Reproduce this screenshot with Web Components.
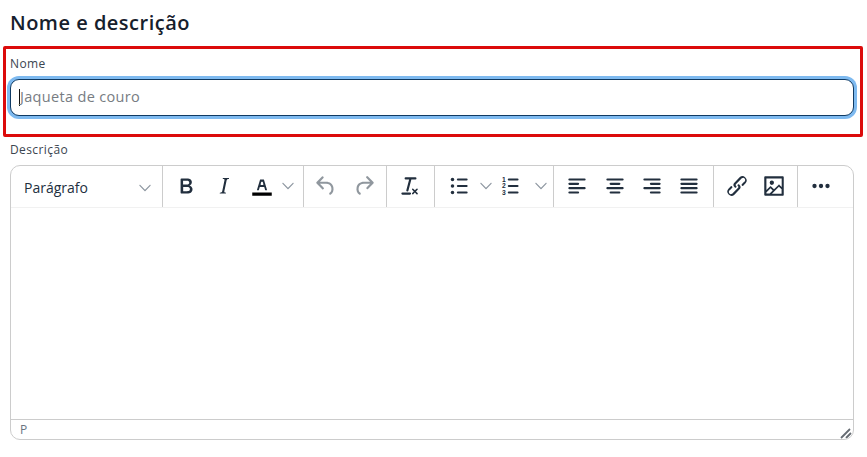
<!DOCTYPE html>
<html lang="pt"><head><meta charset="utf-8"><title>Nome e descrição</title>
<style>html,body{margin:0;padding:0;background:#fff;font-family:"Open Sans","Noto Sans",sans-serif}</style></head>
<body>
<form-section heading="Nome e descrição">
  <highlight-box><text-field label="Nome" placeholder="Jaqueta de couro"></text-field></highlight-box>
  <rich-editor label="Descrição"></rich-editor>
</form-section>
<script>
const I={
bold:'<path d="M7.8 19c-.3 0-.5 0-.6-.2l-.2-.5V5.7c0-.2 0-.4.2-.5l.6-.2h5c1.5 0 2.7.3 3.5 1 .7.6 1.1 1.4 1.1 2.5a3 3 0 0 1-.6 1.9c-.4.6-1 1-1.6 1.2.4.1.9.3 1.3.6s.8.7 1 1.2c.4.4.5 1 .5 1.6 0 1.3-.4 2.3-1.3 3-.8.7-2.1 1-3.8 1H7.8Zm5-8.3c.6 0 1.2-.1 1.6-.5.4-.3.6-.7.6-1.3 0-1.1-.8-1.7-2.3-1.7H9.3v3.5h3.4Zm.5 6c.7 0 1.3-.1 1.7-.4.4-.4.6-.9.6-1.5s-.2-1-.7-1.4c-.4-.3-1-.4-2-.4H9.4v3.8h4Z"/>',
italic:'<path d="M16.7 4.7l-.1.9h-.3c-.6 0-1 0-1.4.3-.3.3-.4.6-.5 1.1l-2.1 9.8v.6c0 .5.4.8 1.4.8h.2l-.2.8H8l.2-.8h.2c1.1 0 1.8-.5 2-1.5l2-9.8.1-.5c0-.6-.4-.8-1.4-.8h-.3l.2-.9h5.8Z"/>',
color:'<path d="M3 18h18v3H3z" fill="#000"/><path d="M8.7 16h-.8a.5.5 0 0 1-.5-.6l2.7-9c.1-.3.3-.4.5-.4h2.8c.2 0 .4.1.5.4l2.7 9a.5.5 0 0 1-.5.6h-.8a.5.5 0 0 1-.4-.4l-.7-2.2c0-.3-.3-.4-.5-.4h-3.4c-.2 0-.4.1-.5.4l-.7 2.2c0 .2-.2.4-.4.4Zm2.6-7.6-.6 2a.5.5 0 0 0 .5.6h1.6a.5.5 0 0 0 .5-.6l-.6-2c0-.3-.3-.4-.5-.4h-.4c-.2 0-.4.1-.5.4Z"/>',
undo:'<path d="M6.4 8H12c3.7 0 6.2 2 6.8 5.1.6 2.7-.4 5.6-2.3 6.8a1 1 0 0 1-1-1.8c1.1-.6 1.8-2.7 1.4-4.6-.5-2.1-2.1-3.5-4.9-3.5H6.4l3.3 3.3a1 1 0 1 1-1.4 1.4l-5-5a1 1 0 0 1 0-1.4l5-5a1 1 0 0 1 1.4 1.4L6.4 8Z"/>',
redo:'<path d="M17.6 10H12c-2.8 0-4.4 1.4-4.9 3.5-.4 2 .3 4 1.4 4.6a1 1 0 1 1-1 1.8c-2-1.2-2.9-4.1-2.3-6.8.6-3 3-5.1 6.8-5.1h5.6l-3.3-3.3a1 1 0 1 1 1.4-1.4l5 5a1 1 0 0 1 0 1.4l-5 5a1 1 0 0 1-1.4-1.4l3.3-3.3Z"/>',
clear:'<path d="M13.2 6a1 1 0 0 1 0 .2l-2.6 10a1 1 0 0 1-1 .8h-.2a.8.8 0 0 1-.8-1l2.6-10H8a1 1 0 1 1 0-2h9a1 1 0 0 1 0 2h-3.8ZM5 18h7a1 1 0 0 1 0 2H5a1 1 0 0 1 0-2Zm13 1.5L16.5 18 15 19.5a.7.7 0 0 1-1-1l1.5-1.5-1.5-1.5a.7.7 0 0 1 1-1l1.5 1.5 1.5-1.5a.7.7 0 0 1 1 1L17.5 17l1.5 1.5a.7.7 0 0 1-1 1Z"/>',
ul:'<path d="M11 5h8a1 1 0 0 1 0 2h-8a1 1 0 0 1 0-2Zm0 6h8a1 1 0 0 1 0 2h-8a1 1 0 0 1 0-2Zm0 6h8a1 1 0 0 1 0 2h-8a1 1 0 0 1 0-2Z"/><circle cx="6" cy="6" r="1.6"/><circle cx="6" cy="12" r="1.6"/><circle cx="6" cy="18" r="1.6"/>',
ol:'<path d="M10 17h8a1 1 0 0 1 0 2h-8a1 1 0 0 1 0-2Zm0-6h8a1 1 0 0 1 0 2h-8a1 1 0 0 1 0-2Zm0-6h8a1 1 0 0 1 0 2h-8a1 1 0 0 1 0-2Z"/><g font-family="Liberation Sans,sans-serif" font-size="6.2" font-weight="700" text-anchor="middle"><text x="5.5" y="8.2">1</text><text x="5.5" y="14.2">2</text><text x="5.5" y="20.2">3</text></g>',
left:'<path d="M5 5h14a1 1 0 0 1 0 2H5a1 1 0 1 1 0-2Zm0 4h8a1 1 0 0 1 0 2H5a1 1 0 1 1 0-2Zm0 8h8a1 1 0 0 1 0 2H5a1 1 0 0 1 0-2Zm0-4h14a1 1 0 0 1 0 2H5a1 1 0 0 1 0-2Z"/>',
center:'<path d="M5 5h14a1 1 0 0 1 0 2H5a1 1 0 1 1 0-2Zm3 4h8a1 1 0 0 1 0 2H8a1 1 0 1 1 0-2Zm0 8h8a1 1 0 0 1 0 2H8a1 1 0 0 1 0-2Zm-3-4h14a1 1 0 0 1 0 2H5a1 1 0 0 1 0-2Z"/>',
right:'<path d="M5 5h14a1 1 0 0 1 0 2H5a1 1 0 1 1 0-2Zm6 4h8a1 1 0 0 1 0 2h-8a1 1 0 0 1 0-2Zm0 8h8a1 1 0 0 1 0 2h-8a1 1 0 0 1 0-2Zm-6-4h14a1 1 0 0 1 0 2H5a1 1 0 0 1 0-2Z"/>',
justify:'<path d="M5 5h14a1 1 0 0 1 0 2H5a1 1 0 1 1 0-2Zm0 4h14a1 1 0 0 1 0 2H5a1 1 0 1 1 0-2Zm0 4h14a1 1 0 0 1 0 2H5a1 1 0 0 1 0-2Zm0 4h14a1 1 0 0 1 0 2H5a1 1 0 0 1 0-2Z"/>',
link:'<path d="M6.2 12.3a1 1 0 0 1 1.4 1.4l-2 2a2 2 0 1 0 2.6 2.8l4.8-4.8a1 1 0 0 0 0-1.4 1 1 0 1 1 1.4-1.3 2.9 2.9 0 0 1 0 4L9.6 20a3.9 3.9 0 0 1-5.5-5.5l2-2Zm11.6-.6a1 1 0 0 1-1.4-1.4l2-2a2 2 0 1 0-2.6-2.8L11 10.3a1 1 0 0 0 0 1.4A1 1 0 1 1 9.6 13a2.9 2.9 0 0 1 0-4L14.4 4a3.9 3.9 0 0 1 5.5 5.5l-2 2Z"/>',
image:'<path d="m5 15.7 3.3-3.2c.3-.3.7-.3 1 0L12 15l4.1-4c.3-.4.8-.4 1 0l2 1.9V5H5v10.7ZM5 18V19h3l2.8-2.9-2-2L5 17.9Zm14-3-2.5-2.4-6.4 6.5H19v-4ZM4 3h16c.6 0 1 .4 1 1v16c0 .6-.4 1-1 1H4a1 1 0 0 1-1-1V4c0-.6.4-1 1-1Zm6 8a2 2 0 1 0 0-4 2 2 0 0 0 0 4Z"/>',
more:'<circle cx="6" cy="12" r="2"/><circle cx="12" cy="12" r="2"/><circle cx="18" cy="12" r="2"/>'
};
const chev='<svg width="12" height="12" viewBox="0 0 10 10" fill="currentColor"><path d="M8.9 2.5c.2-.2.5-.2.7 0 .2.2.2.5 0 .7L5.4 7.5c-.2.2-.6.2-.8 0L.4 3.2a.5.5 0 0 1 0-.7c.2-.2.5-.2.7 0L5 6.4l3.9-3.9Z"/></svg>';
class Base extends HTMLElement{
  constructor(){super();this.attachShadow({mode:'open'})}
}
customElements.define('form-section',class extends Base{connectedCallback(){
  this.shadowRoot.innerHTML=`<style>
  :host{display:block;width:867px;height:457px;box-sizing:border-box;padding:9px 4px 0 3px;overflow:hidden;color:#1f2d3d;font-family:"Open Sans","Noto Sans",sans-serif}
  h2{margin:0 0 9px 7px;font-size:20px;line-height:28px;font-weight:600;color:#16202c;letter-spacing:.5px}
  </style><h2>${this.getAttribute('heading')}</h2><slot></slot>`;
}});
customElements.define('highlight-box',class extends Base{connectedCallback(){
  this.shadowRoot.innerHTML=`<style>
  :host{display:block;box-sizing:border-box;height:91px;border:3px solid #dc0b0b;border-radius:2px;padding:5px 6px 0 4px}
  </style><slot></slot>`;
}});
customElements.define('text-field',class extends Base{connectedCallback(){
  this.shadowRoot.innerHTML=`<style>
  :host{display:block}
  label{display:block;font-size:12px;line-height:19px;color:#3b4550;letter-spacing:.4px;margin-bottom:6px}
  .input{box-sizing:border-box;height:37px;border:1px solid #0f3a63;border-radius:9px;box-shadow:0 0 0 3px #7ebaf0;display:flex;align-items:center;padding:0 0 2px 8px;font-size:14.5px;color:#777c82;letter-spacing:.33px;background:#fff}
  .caret{width:1px;height:17px;background:#111;flex:none;margin-top:2px}
  </style><label>${this.getAttribute('label')}</label><div class="input"><span class="caret"></span><span>${this.getAttribute('placeholder')}</span></div>`;
}});
customElements.define('tb-group',class extends Base{connectedCallback(){
  this.shadowRoot.innerHTML=`<style>
  :host{display:flex;box-sizing:border-box;align-items:center;height:41px;border-right:1px solid #ccc;flex:none}
  :host(:last-child){border-right:0}
  </style><slot></slot>`;
}});
customElements.define('tb-icon',class extends Base{connectedCallback(){
  const w=this.getAttribute('w')||38;
  this.shadowRoot.innerHTML=`<style>
  :host{display:flex;flex:none;align-items:center;justify-content:center;height:41px;width:${w}px;color:#222f3e;padding-bottom:1px;box-sizing:border-box}
  :host([off]){color:rgba(34,47,62,.5)}
  :host([chev]){color:#8d96a0}
  svg{display:block}
  </style>${this.hasAttribute('chev')?chev:`<svg width="26" height="26" viewBox="0 0 24 24" fill="currentColor">${I[this.getAttribute('name')]}</svg>`}`;
}});
customElements.define('rich-editor',class extends Base{connectedCallback(){
  const b=(n,x='')=>`<tb-icon name="${n}" ${x}></tb-icon>`,c=`<tb-icon chev w="14"></tb-icon>`;
  const g=(w,pad,inner)=>`<tb-group style="width:${w}px;padding-left:${pad}px">${inner}</tb-group>`;
  const s=n=>`<div style="flex:none;margin-left:${n}px"></div>`;
  this.shadowRoot.innerHTML=`<style>
  :host{display:block;margin:3px 9px 0 7px}
  label{display:block;font-size:12px;line-height:19px;color:#3b4550;letter-spacing:.4px;margin-bottom:6px}
  .box{box-sizing:border-box;height:275px;border:1px solid #ccc;border-radius:10px;display:flex;flex-direction:column;overflow:hidden;background:#fff}
  .bar{display:flex;height:42px;flex:none;border-bottom:1px solid #f1f1f1;box-sizing:border-box}
  .select{box-sizing:border-box;width:152px;display:flex;align-items:center;justify-content:space-between;padding:2px 11px 0 13px;font:14px/20px "Open Sans","Noto Sans",sans-serif;color:#222f3e}
  .select span{display:flex;color:#8d96a0}
  .area{flex:1}
  .status{box-sizing:border-box;height:20px;flex:none;border-top:1px solid #ccc;display:flex;align-items:center;justify-content:space-between;padding:1px 1px 0 9px;font:12px/1 "Open Sans",sans-serif;color:#6a747f}
  .status svg{display:block;margin-top:5px}
  </style>
  <label>${this.getAttribute('label')}</label>
  <div class="box"><div class="bar">
    <tb-group style="width:152px"><div class="select">Parágrafo<span>${chev}</span></div></tb-group>
    ${g(141,4,b('bold')+b('italic')+b('color')+c)}
    ${g(83,3,b('undo','off')+b('redo','off'))}
    ${g(48,4,b('clear'))}
    ${g(119,5,b('ul')+s(1)+c+s(-1)+b('ol')+s(4)+c)}
    ${g(160,4,b('left')+b('center')+s(-1)+b('right')+s(-1)+b('justify'))}
    ${g(84,4,b('link')+s(-1)+b('image'))}
    ${g(56,4,b('more'))}
  </div><div class="area"></div>
  <div class="status"><span>P</span><svg width="12" height="12" viewBox="0 0 12 12"><path d="M1 11 10 2M6 11l5-5" stroke="#666c73" stroke-width="1.8" fill="none"/></svg></div></div>`;
}});
</script>
</body></html>
